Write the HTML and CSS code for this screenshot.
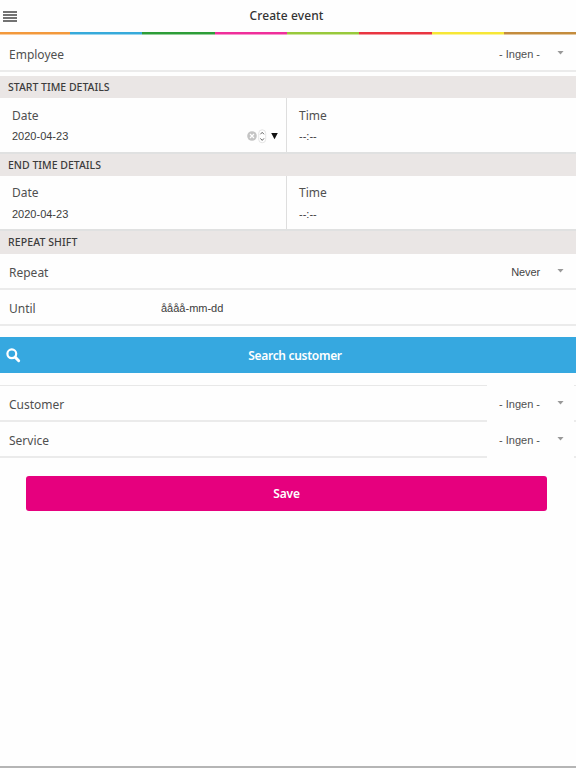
FILE: index.html
```html
<!DOCTYPE html>
<html lang="en">
<head>
<meta charset="utf-8">
<title>Create event</title>
<link rel="stylesheet" href="styles.css">
</head>
<body>
<header class="header">
  <svg class="menu" width="14" height="11" viewBox="0 0 14 11"><path d="M0 1h14M0 4h14M0 7h14M0 10h14" stroke="#444" stroke-width="1.4"/></svg>
  <h1 class="title">Create event</h1>
</header>
<div class="stripe"><i class="orange"></i><i class="blue"></i><i class="green"></i><i class="pink"></i><i class="lime"></i><i class="red"></i><i class="yellow"></i><i class="brown"></i></div>
<main>
  <div class="row employee"><span class="label">Employee</span><span class="select"><span class="value">- Ingen -</span><i class="arrow"></i></span></div>
  <h2 class="section first">START TIME DETAILS</h2>
  <div class="pair start">
    <div class="cell"><span class="label">Date</span><div class="input"><span class="date">2020-04-23</span>
      <svg class="controls" width="34" height="16" viewBox="0 0 34 16"><circle cx="6" cy="8" r="4.8" fill="#c4c4c4"/><path d="M4 6l4 4M8 6l-4 4" stroke="#fff" stroke-width="1.2"/><rect x="12.7" y="1.8" width="7" height="13" rx="3.5" fill="#fff" stroke="#ddd" stroke-width=".8"/><path d="M14.4 6.3l1.8-2 1.8 2M14.4 10.4l1.8 2 1.8-2" fill="none" stroke="#666"/><path d="M25.2 5h6.6l-3.3 6.2z" fill="#111"/></svg></div></div>
    <div class="cell"><span class="label">Time</span><div class="input time">--:--</div></div>
  </div>
  <h2 class="section">END TIME DETAILS</h2>
  <div class="pair end">
    <div class="cell"><span class="label">Date</span><div class="input"><span class="date">2020-04-23</span></div></div>
    <div class="cell"><span class="label">Time</span><div class="input time">--:--</div></div>
  </div>
  <h2 class="section repeat">REPEAT SHIFT</h2>
  <div class="row"><span class="label">Repeat</span><span class="select"><span class="value never">Never</span><i class="arrow"></i></span></div>
  <div class="row until"><span class="label">Until</span><span class="value placeholder">åååå-mm-dd</span></div>
  <button class="search"><svg class="glass" width="15" height="15" viewBox="0 0 15 15"><circle cx="5.8" cy="5.8" r="4.4" fill="none" stroke="#fff" stroke-width="2.2"/><path d="M9.1 9.1l3.6 3.6" stroke="#fff" stroke-width="2.9" stroke-linecap="round"/></svg><span class="search-text">Search customer</span></button>
  <div class="choices">
    <div class="row"><span class="label">Customer</span><span class="select cover"><span class="value">- Ingen -</span><i class="arrow"></i></span></div>
    <div class="row"><span class="label">Service</span><span class="select cover"><span class="value">- Ingen -</span><i class="arrow"></i></span></div>
  </div>
  <button class="save">Save</button>
</main>
</body>
</html>
```

FILE: styles.css
```css
* { box-sizing: border-box; }
body {
  margin: 0;
  height: 768px;
  overflow: hidden;
  display: flex;
  flex-direction: column;
  background: #fefefe;
  border-bottom: 2px solid #b5b5b5;
  color: #505050;
  font-family: "Noto Sans", sans-serif;
  font-size: 12px;
}
main { display: flex; flex-direction: column; }
.header { height: 32px; position: relative; display: flex; align-items: center; justify-content: center; }
.menu { position: absolute; left: 3px; top: 11px; }
.title { margin: 0; padding: 0 3px 1px 0; font-size: 12px; font-weight: 500; color: #333; letter-spacing: .1px; }
.stripe { display: grid; grid-template-columns: 70px 72px 73px 72px 72px 73px 72px 72px; height: 3px; }
.stripe i { border-bottom: 1px solid #ffffff80; }
.orange { background: #f3993c; }
.blue { background: #36aadb; }
.green { background: #2d9d38; }
.pink { background: #ef2e9b; }
.lime { background: #98c93c; }
.red { background: #e93541; }
.yellow { background: #f7e736; }
.brown { background: #c48c3d; }
.row { height: 36px; display: flex; align-items: center; justify-content: space-between; padding: 2px 0 0 9px; border-bottom: 2px solid #ebebeb; }
.row.employee { height: 37px; padding-top: 3px; }
.label { white-space: nowrap; }
.select { width: 89px; height: 34px; display: flex; align-items: center; justify-content: flex-end; padding-right: 12px; }
.cover { background: #fefefe; margin: -4px 2px -4px 0; height: 38px; width: 87px; padding: 0 10px 0 0; }
.value, .input { font-family: "Liberation Sans", sans-serif; font-size: 11px; color: #505050; white-space: nowrap; }
.never { color: #444; letter-spacing: -.1px; }
.arrow { width: 7px; height: 4px; margin: 0 0 3px 17px; background: #999; clip-path: polygon(0 0, 100% 0, 50% 100%); }
.section { height: 22px; margin: 0; padding-left: 8px; display: flex; align-items: center; background: #eae6e5; color: #3c3c3c; font-size: 10.5px; font-weight: 500; white-space: nowrap; }
.first { margin-top: 4px; }
.section.repeat { height: 23px; padding-bottom: 2px; letter-spacing: .1px; }
.pair { display: grid; grid-template-columns: 287px 1fr; height: 56px; border-bottom: 2px solid #e0e1e1; }
.pair.end { height: 55px; }
.cell { padding: 9px 5px 0 12px; }
.cell:first-child { border-right: 1px solid #dedede; padding-right: 6px; }
.cell .label { display: block; height: 17px; line-height: 17px; }
.input { height: 23px; display: flex; align-items: center; justify-content: space-between; color: #3c3c3c; }
.end .cell { padding-top: 8px; }
.end .input { height: 26px; }
.until { justify-content: flex-start; }
.until .label { width: 152px; }
.placeholder { color: #3c3c3c; }
.search, .save { border: 0; padding: 0; color: #fff; font: 600 12px "Noto Sans", sans-serif; }
.search { position: relative; height: 36px; margin-top: 11px; padding-left: 14px; background: #36a8e0; letter-spacing: -.3px; }
.glass { position: absolute; left: 6px; top: 11px; }
.choices { margin-top: 12px; border-top: 1px solid #e8e8e8; }
.save { height: 35px; margin: 18px 29px 0 26px; border-radius: 3px; background: #e6007e; letter-spacing: -.2px; }
```
